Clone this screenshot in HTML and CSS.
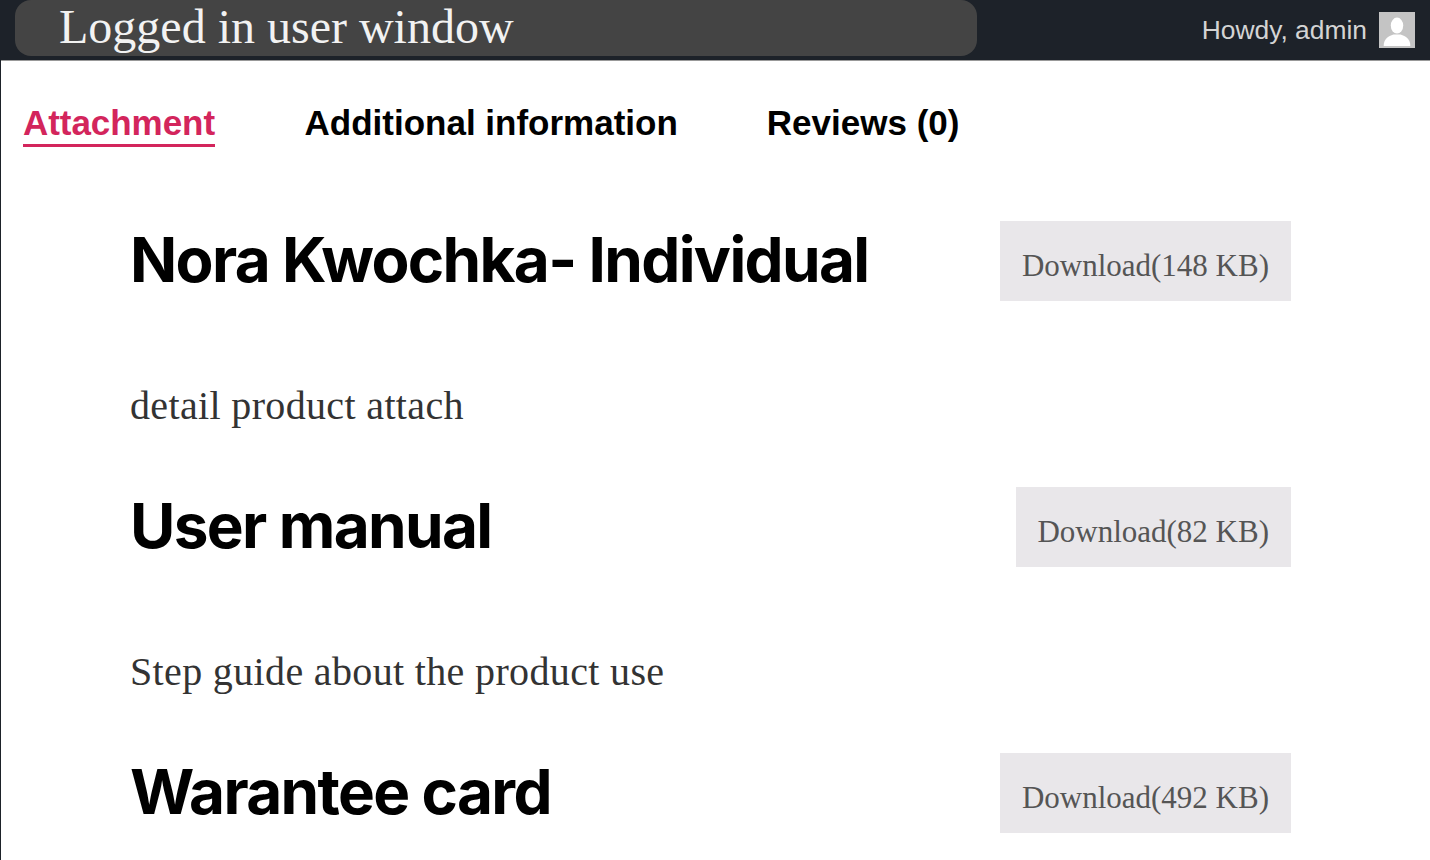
FILE: index.html
```html
<!DOCTYPE html>
<html lang="en">
<head>
<meta charset="utf-8">
<title>Logged in user window</title>
<link rel="stylesheet" href="styles.css">
</head>
<body>
<header class="topbar">
  <div class="pill"><span class="pill-title">Logged in user window</span></div>
  <div class="account">
    <span class="howdy">Howdy, admin</span>
    <span class="avatar">
      <svg viewBox="0 0 36 36" width="32" height="32" aria-hidden="true">
        <rect width="36" height="36" fill="#c4c4c4"/>
        <ellipse cx="18" cy="13" rx="7" ry="9" fill="#fff"/>
        <path d="M3 36c0-8 5-11 11-13h8c6 2 11 5 11 13z" fill="#fff"/>
      </svg>
    </span>
  </div>
</header>
<main class="content">
  <nav class="tabs">
    <a class="tab active">Attachment</a>
    <a class="tab">Additional information</a>
    <a class="tab">Reviews (0)</a>
  </nav>
  <section class="list">
    <article class="item">
      <div class="item-head">
        <h2 class="item-title">Nora Kwochka- Individual</h2>
        <a class="download">Download(148 KB)</a>
      </div>
      <p class="item-desc">detail product attach</p>
    </article>
    <article class="item">
      <div class="item-head">
        <h2 class="item-title">User manual</h2>
        <a class="download">Download(82 KB)</a>
      </div>
      <p class="item-desc">Step guide about the product use</p>
    </article>
    <article class="item">
      <div class="item-head">
        <h2 class="item-title">Warantee card</h2>
        <a class="download">Download(492 KB)</a>
      </div>
    </article>
  </section>
</main>
</body>
</html>
```
FILE: styles.css
```css
* { box-sizing: border-box; }
html, body { margin: 0; height: 100%; overflow: hidden; background: #fff; }
body { border-left: 1px solid #1d2229; }

.topbar {
  height: 61px;
  background: #1d2229;
  border-bottom: 1px solid #999;
  display: flex;
  justify-content: space-between;
  padding: 0 15px 0 14px;
}
.pill {
  width: 962px;
  height: 56px;
  background: #444;
  border-radius: 16px;
  padding: 0 0 2px 44px;
  display: flex;
  align-items: center;
}
.pill-title {
  font: 48px/54px "Liberation Serif", serif;
  color: #f2f2f2;
}
.account { display: flex; align-items: center; gap: 12px; height: 60px; }
.howdy { font: 26.4px/1 "Liberation Sans", sans-serif; color: #d4d4d4; }
.avatar { width: 36px; height: 36px; border: 2px solid #c4c4c4; display: block; }
.avatar svg { display: block; }

.tabs {
  display: flex;
  gap: 89px;
  padding: 41px 0 0 22px;
}
.tab {
  font: bold 35px/42px "Liberation Sans", sans-serif;
  color: #000;
  height: 45px;
}
.tab.active {
  color: #d3255c;
  border-bottom: 3px solid #d3255c;
  letter-spacing: -0.05px;
  margin-right: 0.5px;
}

.list { padding: 74px 139px 0 129px; }
.item { height: 266px; }
.item-head {
  display: flex;
  justify-content: space-between;
  align-items: center;
  height: 80px;
}
.item-title {
  margin: -2px 0 0;
  font: bold 62px/80px Inter, sans-serif;
  letter-spacing: -1.65px;
  color: #000;
}
.download {
  height: 80px;
  padding: 0 22px 0 21.5px;
  background: #e9e7ea;
  font: 31px/90px "Liberation Serif", serif;
  color: #555;
  white-space: nowrap;
}
.item-desc {
  margin: 81px 0 0;
  font: 40px/48px "Liberation Serif", serif;
  letter-spacing: 0.35px;
  color: #333;
}
```
